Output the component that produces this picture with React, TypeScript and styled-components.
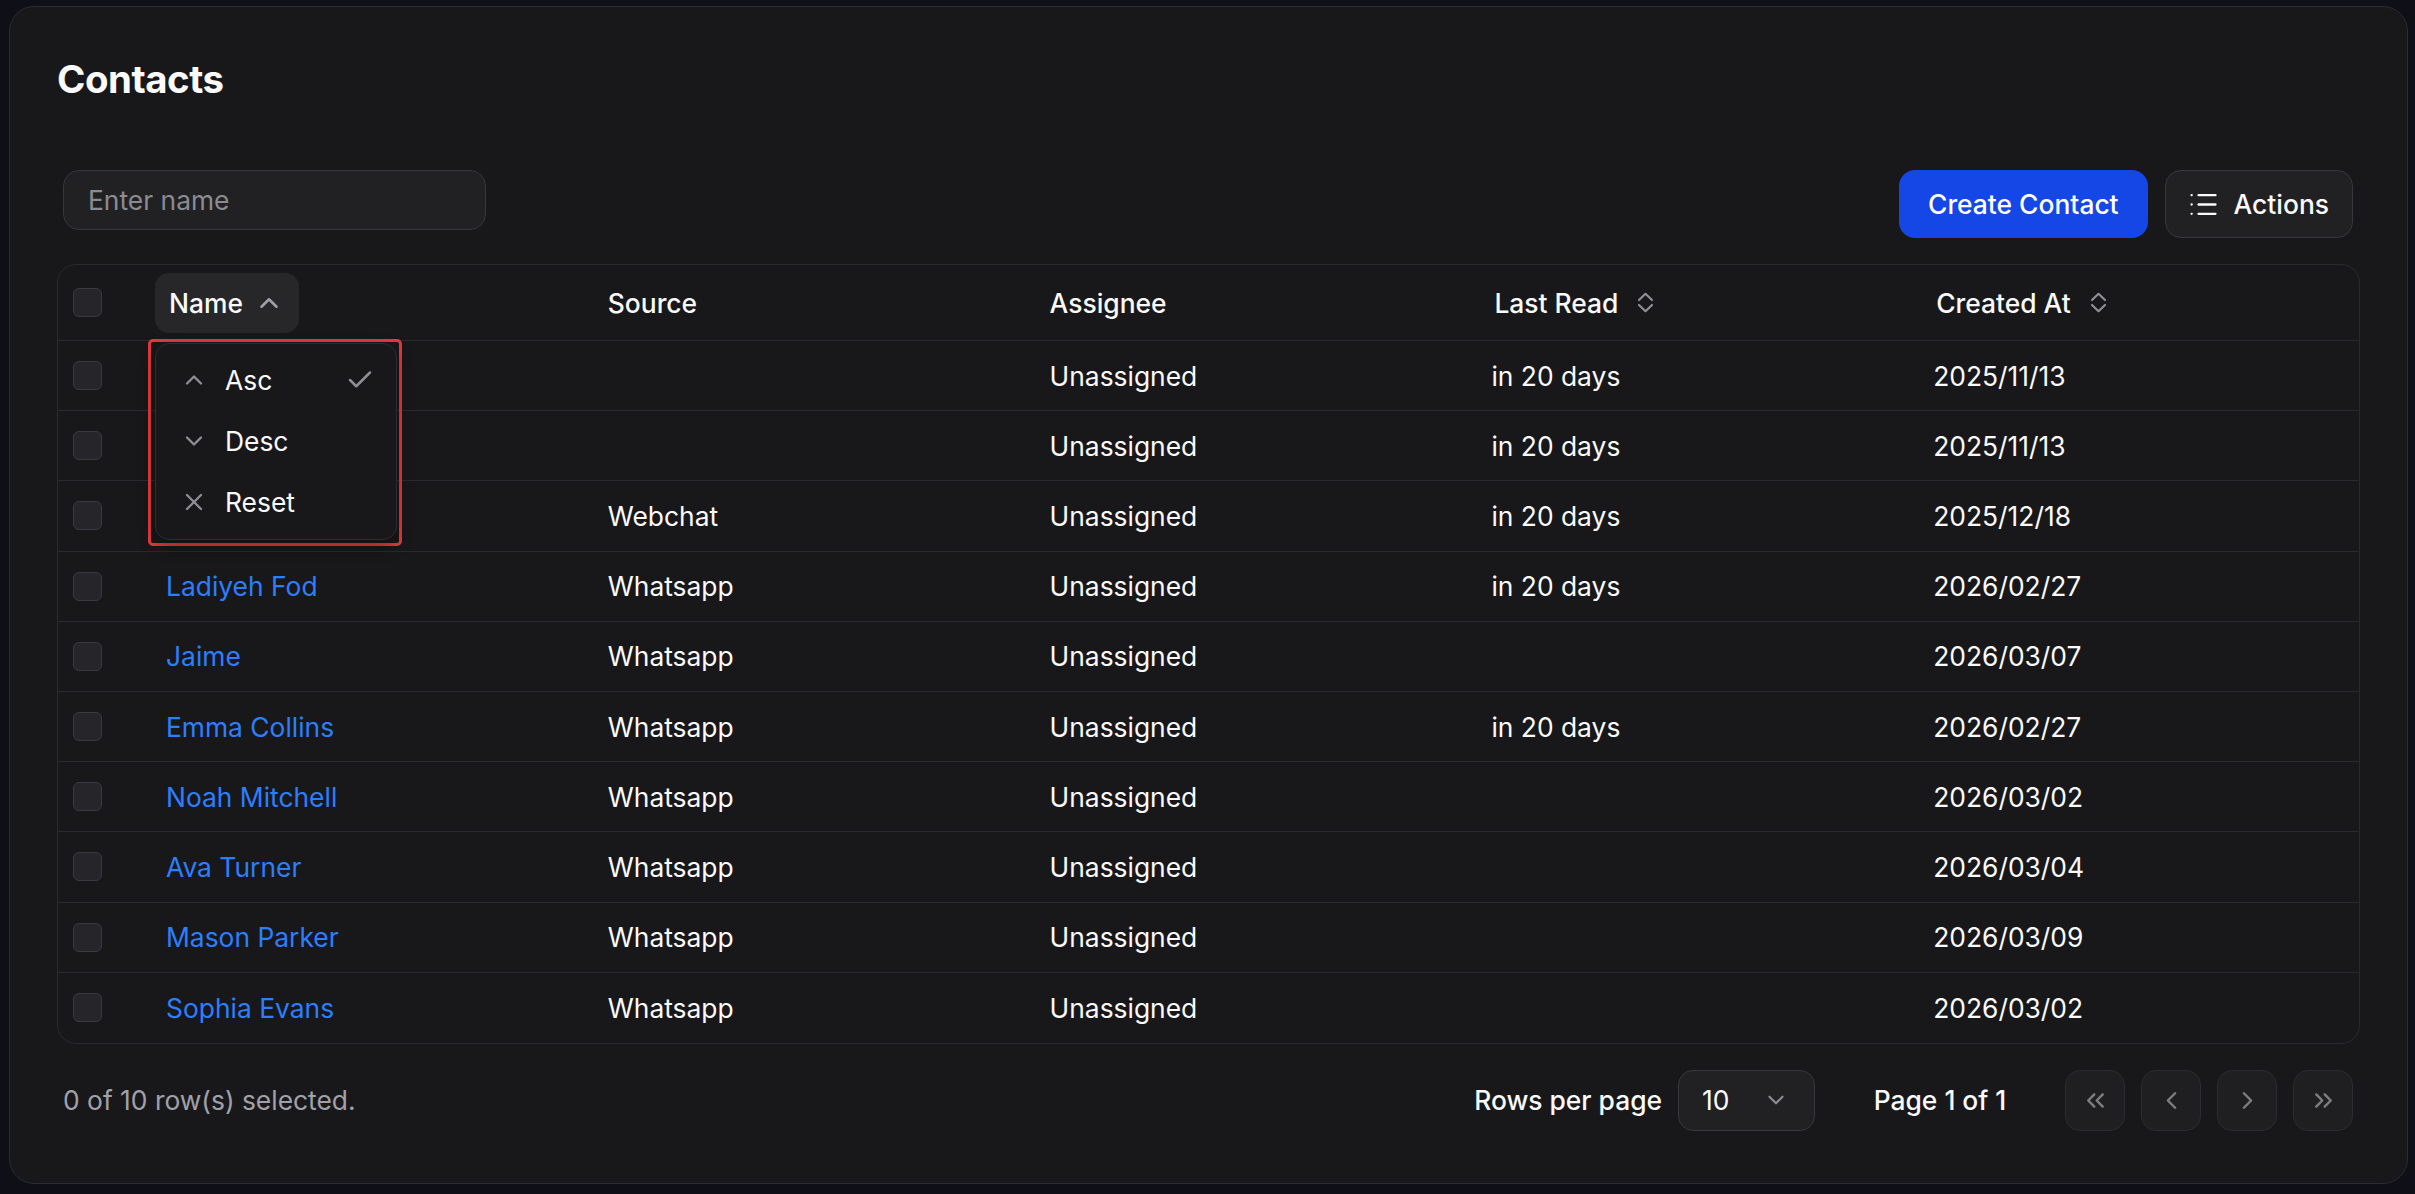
import styled, { createGlobalStyle } from 'styled-components';
import {
  Check,
  ChevronDown,
  ChevronLeft,
  ChevronRight,
  ChevronUp,
  ChevronsLeft,
  ChevronsRight,
  X,
} from 'lucide-react';

type Contact = {
  name: string;
  source: string;
  assignee: string;
  lastRead: string;
  createdAt: string;
};

// first three rows sit under the open sort menu
const contacts: Contact[] = [
  { name: '', source: '', assignee: 'Unassigned', lastRead: 'in 20 days', createdAt: '2025/11/13' },
  { name: '', source: '', assignee: 'Unassigned', lastRead: 'in 20 days', createdAt: '2025/11/13' },
  { name: '', source: 'Webchat', assignee: 'Unassigned', lastRead: 'in 20 days', createdAt: '2025/12/18' },
  { name: 'Ladiyeh Fod', source: 'Whatsapp', assignee: 'Unassigned', lastRead: 'in 20 days', createdAt: '2026/02/27' },
  { name: 'Jaime', source: 'Whatsapp', assignee: 'Unassigned', lastRead: '', createdAt: '2026/03/07' },
  { name: 'Emma Collins', source: 'Whatsapp', assignee: 'Unassigned', lastRead: 'in 20 days', createdAt: '2026/02/27' },
  { name: 'Noah Mitchell', source: 'Whatsapp', assignee: 'Unassigned', lastRead: '', createdAt: '2026/03/02' },
  { name: 'Ava Turner', source: 'Whatsapp', assignee: 'Unassigned', lastRead: '', createdAt: '2026/03/04' },
  { name: 'Mason Parker', source: 'Whatsapp', assignee: 'Unassigned', lastRead: '', createdAt: '2026/03/09' },
  { name: 'Sophia Evans', source: 'Whatsapp', assignee: 'Unassigned', lastRead: '', createdAt: '2026/03/02' },
];

const SortIcon = () => (
  <svg width="17" height="21" viewBox="0 0 17 21" fill="none" stroke="currentColor" strokeWidth="2.2" strokeLinecap="round" strokeLinejoin="round">
    <polyline points="2,8 8.5,1.8 15,8" />
    <polyline points="2,13 8.5,19.2 15,13" />
  </svg>
);

const ListIcon = () => (
  <svg width="27" height="23" viewBox="0 0 27 23" fill="none" stroke="currentColor" strokeWidth="2.3" strokeLinecap="round">
    <path d="M1.6 2.2h.1M1.6 11.5h.1M1.6 20.8h.1" />
    <path d="M8.5 2.2h17M8.5 11.5h17M8.5 20.8h17" />
  </svg>
);

const App = () => {
  return (
    <>
      <GlobalStyle />
      <Page>
        <Card>
          <Title>Contacts</Title>
          <Toolbar>
            <SearchInput placeholder="Enter name" />
            <ButtonGroup>
              <PrimaryButton>Create Contact</PrimaryButton>
              <OutlineButton>
                <ListIcon />
                Actions
              </OutlineButton>
            </ButtonGroup>
          </Toolbar>

          <Table>
            <HeaderRow>
              <CheckCell>
                <Checkbox />
              </CheckCell>
              <SortHeaderCell>
                <SortButton $active>
                  Name
                  <ChevronUp size={30} strokeWidth={2} color="#a1a1aa" />
                </SortButton>
                <MenuFrame>
                  <Menu>
                    <MenuItem>
                      <ChevronUp size={28} strokeWidth={2} />
                      <MenuLabel>Asc</MenuLabel>
                      <CheckMark>
                        <Check size={30} strokeWidth={2} />
                      </CheckMark>
                    </MenuItem>
                    <MenuItem>
                      <ChevronDown size={28} strokeWidth={2} />
                      <MenuLabel>Desc</MenuLabel>
                    </MenuItem>
                    <MenuItem>
                      <X size={28} strokeWidth={2} />
                      <MenuLabel>Reset</MenuLabel>
                    </MenuItem>
                  </Menu>
                </MenuFrame>
              </SortHeaderCell>
              <HeaderCell>Source</HeaderCell>
              <HeaderCell>Assignee</HeaderCell>
              <SortHeaderCell>
                <SortButton>
                  Last Read
                  <SortSlot>
                    <SortIcon />
                  </SortSlot>
                </SortButton>
              </SortHeaderCell>
              <SortHeaderCell>
                <SortButton>
                  Created At
                  <SortSlot>
                    <SortIcon />
                  </SortSlot>
                </SortButton>
              </SortHeaderCell>
            </HeaderRow>

            {contacts.map((c, i) => (
              <BodyRow key={`contact_row_${i}`}>
                <CheckCell>
                  <Checkbox />
                </CheckCell>
                <Cell>
                  <NameLink>{c.name}</NameLink>
                </Cell>
                <Cell>{c.source}</Cell>
                <Cell>{c.assignee}</Cell>
                <Cell>{c.lastRead}</Cell>
                <Cell>{c.createdAt}</Cell>
              </BodyRow>
            ))}
          </Table>

          <Footer>
            <SelectedText>0 of 10 row(s) selected.</SelectedText>
            <Pagination>
              <RowsPerPage>
                <span>Rows per page</span>
                <PageSizeSelect>
                  10
                  <ChevronDown size={26} strokeWidth={2} color="#8b8b91" />
                </PageSizeSelect>
              </RowsPerPage>
              <PageLabel>Page 1 of 1</PageLabel>
              <PagerButtons>
                <PagerButton disabled>
                  <ChevronsLeft size={29} strokeWidth={2} />
                </PagerButton>
                <PagerButton disabled>
                  <ChevronLeft size={29} strokeWidth={2} />
                </PagerButton>
                <PagerButton disabled>
                  <ChevronRight size={29} strokeWidth={2} />
                </PagerButton>
                <PagerButton disabled>
                  <ChevronsRight size={29} strokeWidth={2} />
                </PagerButton>
              </PagerButtons>
            </Pagination>
          </Footer>
        </Card>
      </Page>
    </>
  );
};

export default App;

const GlobalStyle = createGlobalStyle`
  * {
    box-sizing: border-box;
  }
  html,
  body {
    margin: 0;
    background: #0f1017;
  }
  body {
    font-family: Inter, 'Noto Sans', sans-serif;
    color: #fafafa;
    -webkit-font-smoothing: antialiased;
  }
`;

const Page = styled.div`
  height: 1194px;
  padding: 6px 7px 10px 9px;
`;

const Card = styled.div`
  height: 100%;
  display: flex;
  flex-direction: column;
  background: #18181b;
  border: 1px solid #2b2b30;
  border-radius: 25px;
  padding: 46px 47px 52px;
`;

const Title = styled.h1`
  margin: 0;
  font-size: 38.4px;
  line-height: 52px;
  font-weight: 700;
  letter-spacing: -0.012em;
`;

const Toolbar = styled.div`
  margin-top: 65px;
  display: flex;
  justify-content: space-between;
  align-items: flex-start;
  padding: 0 7px 0 6px;
`;

const SearchInput = styled.input`
  width: 423px;
  height: 60px;
  border-radius: 16px;
  border: 1px solid #37373c;
  background: #212124;
  padding: 0 24px;
  font-family: inherit;
  font-size: 26.4px;
  color: #fafafa;
  outline: none;
  &::placeholder {
    color: #8b8b92;
  }
`;

const ButtonGroup = styled.div`
  display: flex;
  gap: 17px;
`;

const PrimaryButton = styled.button`
  height: 68px;
  padding: 0 29px;
  border: none;
  border-radius: 16px;
  background: #1447e6;
  color: #fff;
  font-family: inherit;
  font-size: 26.4px;
  font-weight: 500;
`;

const OutlineButton = styled.button`
  height: 68px;
  display: flex;
  align-items: center;
  gap: 17px;
  padding: 0 23px 0 24px;
  border: 1px solid #38383d;
  border-radius: 16px;
  background: #212124;
  color: #fafafa;
  font-family: inherit;
  font-size: 26.4px;
  font-weight: 500;
`;

const Table = styled.div`
  margin-top: 26px;
  border: 1px solid #2a2a2e;
  border-radius: 19px;
  font-size: 26.4px;
`;

const rowGrid = `
  display: grid;
  grid-template-columns: 92px repeat(5, 1fr);
  border-bottom: 1px solid #2a2a2e;
`;

const HeaderRow = styled.div`
  ${rowGrid}
  height: 76px;
  font-weight: 500;
`;

const BodyRow = styled.div`
  ${rowGrid}
  height: 70.2px;
  &:last-child {
    border-bottom: none;
  }
`;

const Cell = styled.div`
  display: flex;
  align-items: center;
  padding-left: 16px;
  white-space: nowrap;
`;

const HeaderCell = styled(Cell)``;

const SortHeaderCell = styled(Cell)`
  position: relative;
  padding-left: 5px;
`;

const CheckCell = styled(Cell)`
  padding-left: 15px;
`;

const Checkbox = styled.span`
  width: 29px;
  height: 29px;
  border-radius: 6px;
  border: 1px solid #3a3a40;
  background: #26262a;
`;

const SortButton = styled.button<{ $active?: boolean }>`
  height: 60px;
  display: flex;
  align-items: center;
  gap: 11px;
  padding: 0 15px 0 14px;
  border: none;
  border-radius: 14px;
  background: ${({ $active }) => ($active ? '#27272a' : 'transparent')};
  color: #fafafa;
  font-family: inherit;
  font-size: 26.4px;
  font-weight: 500;
`;

const SortSlot = styled.span`
  display: flex;
  margin-left: 8px;
  color: #8e8e94;
`;

const MenuFrame = styled.div`
  position: absolute;
  left: -2px;
  top: 74px;
  z-index: 10;
  padding: 1px 2px 3px 4px;
  border: 3px solid #e5383b;
  border-radius: 5px;
`;

const Menu = styled.div`
  width: 242px;
  padding: 5px 6px 7px;
  background: #18181b;
  border: 1px solid #2c2c31;
  border-radius: 14px;
  box-shadow: 0 6px 16px rgba(0, 0, 0, 0.35);
  font-weight: 400;
`;

const MenuItem = styled.div`
  height: 61px;
  display: flex;
  align-items: center;
  gap: 17px;
  padding: 0 15px 0 18px;
  color: #8e8e94;
`;

const MenuLabel = styled.span`
  color: #fafafa;
  font-size: 26.4px;
`;

const CheckMark = styled.span`
  display: flex;
  margin-left: auto;
`;

const NameLink = styled.a`
  color: #2b7fff;
  text-decoration: none;
`;

const Footer = styled.div`
  margin-top: 26px;
  height: 61px;
  display: flex;
  justify-content: space-between;
  align-items: center;
  padding: 0 7px 0 6px;
  font-size: 26.4px;
`;

const SelectedText = styled.div`
  color: #a1a1aa;
`;

const Pagination = styled.div`
  display: flex;
  align-items: center;
  gap: 48px;
`;

const RowsPerPage = styled.div`
  display: flex;
  align-items: center;
  gap: 16px;
  font-weight: 500;
`;

const PageSizeSelect = styled.div`
  width: 137px;
  height: 61px;
  display: flex;
  align-items: center;
  justify-content: space-between;
  padding: 0 25px 0 23px;
  border: 1px solid #38383d;
  border-radius: 15px;
  background: #212124;
  font-weight: 400;
`;

const PageLabel = styled.div`
  width: 154px;
  text-align: center;
  font-weight: 500;
`;

const PagerButtons = styled.div`
  display: flex;
  gap: 16px;
`;

const PagerButton = styled.button`
  width: 60px;
  height: 61px;
  display: flex;
  align-items: center;
  justify-content: center;
  padding: 0;
  border: 1px solid #3f3f46;
  border-radius: 15px;
  background: #27272a;
  color: #e4e4e7;
  &:disabled {
    opacity: 0.5;
  }
`;
